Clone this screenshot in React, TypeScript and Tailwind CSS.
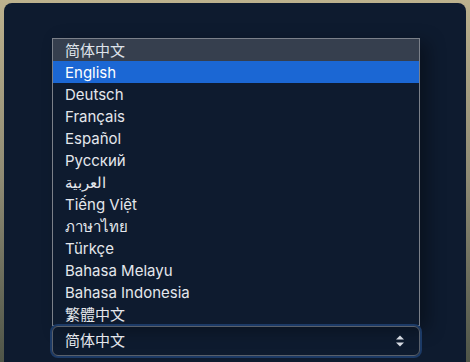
import React from 'react';

const languages = [
  '简体中文',
  'English',
  'Deutsch',
  'Français',
  'Español',
  'Русский',
  'العربية',
  'Tiếng Việt',
  'ภาษาไทย',
  'Türkçe',
  'Bahasa Melayu',
  'Bahasa Indonesia',
  '繁體中文',
];

const font = { fontFamily: 'Inter, "Noto Sans", "Noto Sans CJK SC", sans-serif' };

const App: React.FC = () => {
  return (
    <div className="w-[470px] h-[362px] overflow-hidden bg-gradient-to-b from-[#bdb28e] via-[#8e8a73] to-[#4f5548] pt-[3px] px-[4px]" style={font}>
      <div className="h-[380px] rounded-lg bg-[#0e1b2f] pt-[35px] pl-[48px]">
        {/* Dropdown list */}
        <div className="w-[368px] border border-[#7b8089] bg-[#0e1b2f] shadow-[8px_4px_16px_rgba(0,0,0,0.35)]">
          {languages.map((lang, i) => (
            <div
              key={lang}
              className={`h-[22px] px-3 flex items-center text-[15px] leading-none ${
                i === 0 ? 'bg-[#363f4e] text-[#dfe3ea]' : i === 1 ? 'bg-[#1b67d4] text-white' : 'text-[#e4e7ec]'
              }`}
            >
              {lang}
            </div>
          ))}
        </div>

        {/* Select box */}
        <div className="w-[368px] h-[30px] rounded-md border border-[#59606b] ring-2 ring-[#1c3a66] flex items-center justify-between pl-3 pr-[14px] text-[15px] text-[#e4e7ec]">
          <span>简体中文</span>
          <svg width="10" height="12" viewBox="0 0 10 12" fill="#d6dae1">
            <path d="M5 0.5 L9 4.5 L1 4.5 Z" />
            <path d="M5 11.5 L9 7.5 L1 7.5 Z" />
          </svg>
        </div>
      </div>
    </div>
  );
};

export default App;
